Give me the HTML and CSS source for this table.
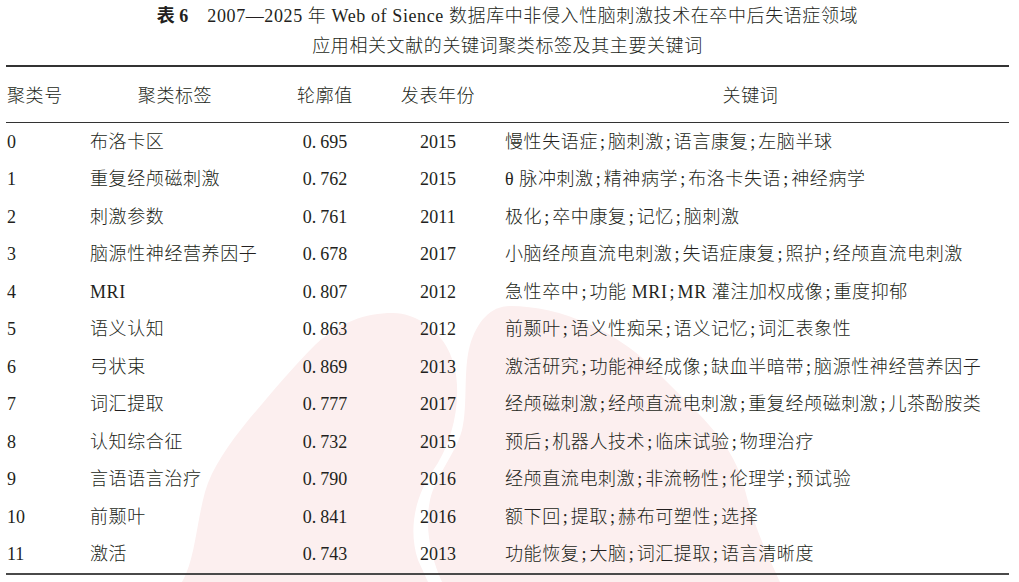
FILE: index.html
```html
<!DOCTYPE html>
<html lang="zh-CN">
<head>
<meta charset="utf-8">
<title>表6 关键词聚类标签</title>
<link rel="stylesheet" href="styles.css">
</head>
<body>
<div class="page">
  <svg class="wm" width="1019" height="582" viewBox="0 0 1019 582" aria-hidden="true">
    <path d="M393,313 C415,313 445,330 454,365 C462,395 455,440 432,472 C415,497 408,530 418,560 L428,582 L182,582 C195,560 196,525 205,492 C212,468 228,445 250,418 C270,395 290,370 315,345 C340,322 365,313 393,313 Z"/>
    <path d="M510,306 C560,306 620,330 665,380 C700,415 735,445 745,490 C755,530 770,560 780,582 L442,582 C432,560 424,530 430,500 C436,475 455,455 462,430 C468,405 463,370 470,345 C477,322 490,306 510,306 Z"/>
  </svg>
  <div class="content">
    <div class="caption">
      <p><b class="tno">表 6</b>2007—2025 年 Web of Sience 数据库中非侵入性脑刺激技术在卒中后失语症领域</p>
      <p>应用相关文献的关键词聚类标签及其主要关键词</p>
    </div>
    <table class="tbl">
      <colgroup>
        <col class="w1"><col class="w2"><col class="w3"><col class="w4"><col class="w5">
      </colgroup>
      <thead>
        <tr>
          <th class="c1">聚类号</th>
          <th class="c2">聚类标签</th>
          <th class="c3">轮廓值</th>
          <th class="c4">发表年份</th>
          <th class="c5">关键词</th>
        </tr>
      </thead>
      <tbody>
        <tr><td class="c1 num">0</td><td class="c2">布洛卡区</td><td class="c3 num">0<span class="pt">.</span>695</td><td class="c4 num">2015</td><td class="c5">慢性失语症<span class="s">;</span>脑刺激<span class="s">;</span>语言康复<span class="s">;</span>左脑半球</td></tr>
        <tr><td class="c1 num">1</td><td class="c2">重复经颅磁刺激</td><td class="c3 num">0<span class="pt">.</span>762</td><td class="c4 num">2015</td><td class="c5">θ 脉冲刺激<span class="s">;</span>精神病学<span class="s">;</span>布洛卡失语<span class="s">;</span>神经病学</td></tr>
        <tr><td class="c1 num">2</td><td class="c2">刺激参数</td><td class="c3 num">0<span class="pt">.</span>761</td><td class="c4 num">2011</td><td class="c5">极化<span class="s">;</span>卒中康复<span class="s">;</span>记忆<span class="s">;</span>脑刺激</td></tr>
        <tr><td class="c1 num">3</td><td class="c2">脑源性神经营养因子</td><td class="c3 num">0<span class="pt">.</span>678</td><td class="c4 num">2017</td><td class="c5">小脑经颅直流电刺激<span class="s">;</span>失语症康复<span class="s">;</span>照护<span class="s">;</span>经颅直流电刺激</td></tr>
        <tr><td class="c1 num">4</td><td class="c2">MRI</td><td class="c3 num">0<span class="pt">.</span>807</td><td class="c4 num">2012</td><td class="c5">急性卒中<span class="s">;</span>功能 MRI<span class="s">;</span>MR 灌注加权成像<span class="s">;</span>重度抑郁</td></tr>
        <tr><td class="c1 num">5</td><td class="c2">语义认知</td><td class="c3 num">0<span class="pt">.</span>863</td><td class="c4 num">2012</td><td class="c5">前颞叶<span class="s">;</span>语义性痴呆<span class="s">;</span>语义记忆<span class="s">;</span>词汇表象性</td></tr>
        <tr><td class="c1 num">6</td><td class="c2">弓状束</td><td class="c3 num">0<span class="pt">.</span>869</td><td class="c4 num">2013</td><td class="c5">激活研究<span class="s">;</span>功能神经成像<span class="s">;</span>缺血半暗带<span class="s">;</span>脑源性神经营养因子</td></tr>
        <tr><td class="c1 num">7</td><td class="c2">词汇提取</td><td class="c3 num">0<span class="pt">.</span>777</td><td class="c4 num">2017</td><td class="c5">经颅磁刺激<span class="s">;</span>经颅直流电刺激<span class="s">;</span>重复经颅磁刺激<span class="s">;</span>儿茶酚胺类</td></tr>
        <tr><td class="c1 num">8</td><td class="c2">认知综合征</td><td class="c3 num">0<span class="pt">.</span>732</td><td class="c4 num">2015</td><td class="c5">预后<span class="s">;</span>机器人技术<span class="s">;</span>临床试验<span class="s">;</span>物理治疗</td></tr>
        <tr><td class="c1 num">9</td><td class="c2">言语语言治疗</td><td class="c3 num">0<span class="pt">.</span>790</td><td class="c4 num">2016</td><td class="c5">经颅直流电刺激<span class="s">;</span>非流畅性<span class="s">;</span>伦理学<span class="s">;</span>预试验</td></tr>
        <tr><td class="c1 num">10</td><td class="c2">前颞叶</td><td class="c3 num">0<span class="pt">.</span>841</td><td class="c4 num">2016</td><td class="c5">额下回<span class="s">;</span>提取<span class="s">;</span>赫布可塑性<span class="s">;</span>选择</td></tr>
        <tr class="last"><td class="c1 num">11</td><td class="c2">激活</td><td class="c3 num">0<span class="pt">.</span>743</td><td class="c4 num">2013</td><td class="c5">功能恢复<span class="s">;</span>大脑<span class="s">;</span>词汇提取<span class="s">;</span>语言清晰度</td></tr>
      </tbody>
    </table>
  </div>
</div>
</body>
</html>
```

FILE: styles.css
```css
html, body {
  margin: 0;
  padding: 0;
  background: #ffffff;
}

body {
  color: #231f20;
  font-family: "Liberation Serif", "Noto Sans CJK SC", serif;
  font-size: 18px;
  font-weight: 300;
}

.page {
  position: relative;
  width: 1019px;
  height: 582px;
  overflow: hidden;
}

.wm {
  position: absolute;
  left: 0;
  top: 0;
  z-index: 0;
  fill: #fcefef;
}

.content {
  position: relative;
  z-index: 1;
  width: 1003px;
  padding: 1px 0 0 6px;
}

.caption {
  text-align: center;
  line-height: 30px;
  letter-spacing: 0.6px;
}

.caption p {
  margin: 0;
}

.tno {
  font-weight: 700;
  letter-spacing: 0;
  margin-right: 19px;
}

.tbl {
  width: 1003px;
  margin-top: 4px;
  table-layout: fixed;
  border-collapse: separate;
  border-spacing: 0;
  border-top: 2px solid #333333;
}

.w1 { width: 84px; }
.w2 { width: 170px; }
.w3 { width: 130px; }
.w4 { width: 96px; }
.w5 { width: 523px; }

.tbl th {
  height: 52px;
  padding: 3px 0 0 0;
  font-weight: 300;
  line-height: 20px;
  letter-spacing: 0.6px;
  vertical-align: middle;
  border-bottom: 1px solid #333333;
}

.tbl td {
  height: 37.5px;
  padding: 0;
  line-height: 20px;
  letter-spacing: 0.6px;
  vertical-align: middle;
  white-space: nowrap;
}

.tbl tr.last td {
  border-bottom: 2px solid #4a4a4a;
  height: 37.5px;
}

.tbl th.c1 { text-align: left; padding-left: 1px; }
.tbl th.c2 { text-align: center; }
.tbl th.c3 { text-align: center; }
.tbl th.c4 { text-align: center; }
.tbl th.c5 { text-align: center; padding-left: 6px; }

.tbl td.c1 { text-align: left; padding-left: 1px; }
.tbl td.c2 { text-align: left; }
.tbl td.c3 { text-align: center; }
.tbl td.c4 { text-align: center; }
.tbl td.c5 { text-align: left; padding-left: 19px; }

.num {
  letter-spacing: 0 !important;
}

.pt {
  margin-right: 4px;
}

.s {
  letter-spacing: 0;
  margin: 0 3px 0 2px;
}
```
